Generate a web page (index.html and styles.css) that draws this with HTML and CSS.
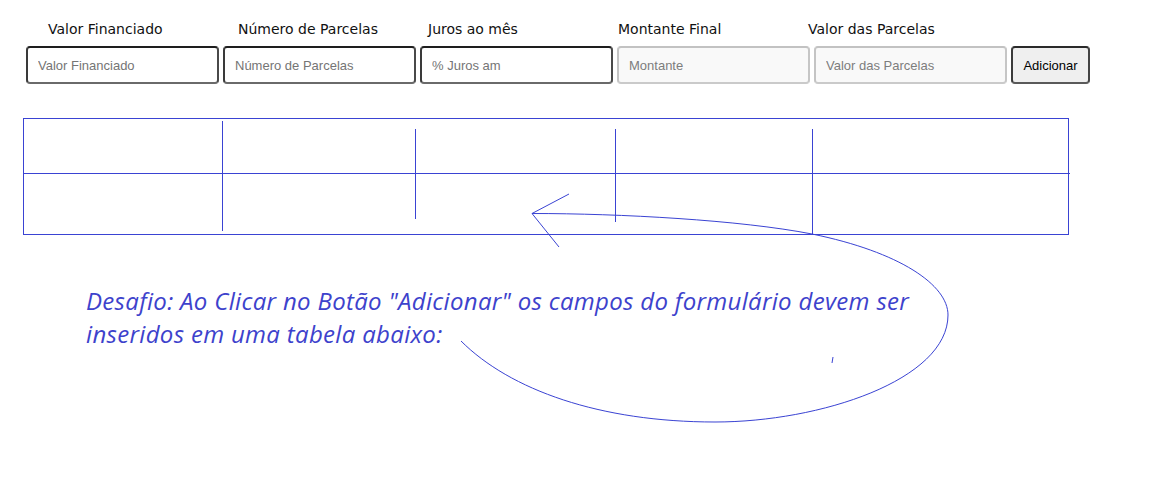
FILE: index.html
```html
<!DOCTYPE html>
<html lang="pt-BR">
<head>
<meta charset="utf-8">
<title>Desafio</title>
<link rel="stylesheet" href="styles.css">
</head>
<body>
<div class="page">
  <div class="labels">
    <span class="label">Valor Financiado</span>
    <span class="label">Número de Parcelas</span>
    <span class="label">Juros ao mês</span>
    <span class="label">Montante Final</span>
    <span class="label">Valor das Parcelas</span>
  </div>
  <form class="fields">
    <input class="field" type="text" placeholder="Valor Financiado">
    <input class="field" type="text" placeholder="Número de Parcelas">
    <input class="field" type="text" placeholder="% Juros am">
    <input class="field" type="text" placeholder="Montante" disabled>
    <input class="field" type="text" placeholder="Valor das Parcelas" disabled>
    <button class="add" type="button">Adicionar</button>
  </form>
  <div class="grid-box"></div>
  <p class="note">Desafio: Ao Clicar no Botão "Adicionar" os campos do formulário devem ser inseridos em uma tabela abaixo:</p>
  <svg class="ink" width="1150" height="501" viewBox="0 0 1150 501" xmlns="http://www.w3.org/2000/svg">
    <g fill="none" stroke="#3a43d3" stroke-width="1">
      <path d="M222.5 121 V231"/>
      <path d="M415.5 129 V219"/>
      <path d="M615.5 129 V222"/>
      <path d="M812.5 129 V235"/>
      <path d="M23 173.5 H1070"/>
      <path d="M569 194 L532 213.5 L559 247"/>
      <path d="M532 213.5 C620 213.5 740 220 812 234 C900 252 948 285 948 315 C948 380 820 422 715 422 C600 422 510 390 461 341"/>
      <path d="M833 357 L832 363"/>
    </g>
  </svg>
</div>
</body>
</html>
```
FILE: styles.css
```css
html, body {
  margin: 0;
  padding: 0;
  background: #ffffff;
}

.page {
  position: relative;
  width: 1150px;
  height: 501px;
  overflow: hidden;
}

.labels {
  display: flex;
  padding: 21px 0 0 48px;
  height: 17px;
}

.label {
  width: 190px;
  flex: none;
  font-family: "DejaVu Sans", Verdana, sans-serif;
  font-size: 14px;
  line-height: 17px;
  color: #111111;
}

.fields {
  display: flex;
  gap: 4px;
  margin: 8px 0 0 26px;
}

.field {
  box-sizing: border-box;
  width: 193px;
  height: 38px;
  margin: 0;
  padding: 0 10px;
  border: 2px solid;
  border-color: #1e1e1e #4a4a4a #6a6a6a #3a3a3a;
  border-radius: 4px;
  background: #ffffff;
  font-family: "Liberation Sans", Arial, sans-serif;
  font-size: 13px;
  color: #222222;
  outline: none;
}

.field::placeholder {
  color: #757575;
}

.field:disabled {
  background: #f9f9f9;
  border-color: #c2c2c2 #c6c6c6 #cacaca #c4c4c4;
}

.field:disabled::placeholder {
  color: #7d7d7d;
}

.add {
  box-sizing: border-box;
  width: 79px;
  height: 38px;
  margin: 0;
  padding: 0;
  border: 2px solid;
  border-color: #2a2a2a #444444 #5a5a5a #3a3a3a;
  border-radius: 4px;
  background: #efefef;
  font-family: "Liberation Sans", Arial, sans-serif;
  font-size: 13px;
  color: #000000;
}

.grid-box {
  box-sizing: border-box;
  width: 1046px;
  height: 117px;
  margin: 34px 0 0 23px;
  border: 1px solid #3a43d3;
}

.note {
  margin: 49px 0 0 86px;
  width: 850px;
  font-family: "Open Sans", "Noto Sans", sans-serif;
  font-style: italic;
  font-size: 24px;
  letter-spacing: 0.32px;
  line-height: 33px;
  color: #3d42cc;
}

.ink {
  position: absolute;
  left: 0;
  top: 0;
  pointer-events: none;
}
```
